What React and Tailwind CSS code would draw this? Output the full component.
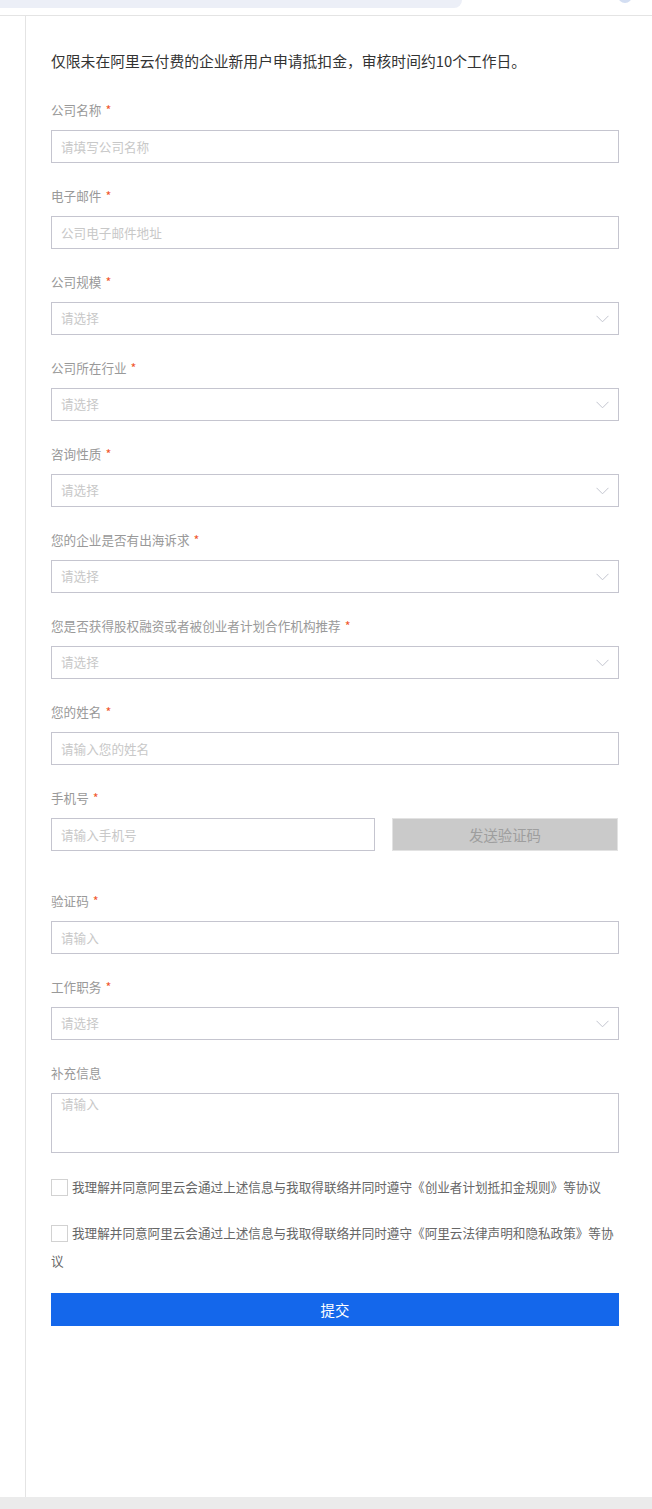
import React from 'react';

const fields = [
  { label: '公司名称', type: 'input', placeholder: '请填写公司名称' },
  { label: '电子邮件', type: 'input', placeholder: '公司电子邮件地址' },
  { label: '公司规模', type: 'select' },
  { label: '公司所在行业', type: 'select' },
  { label: '咨询性质', type: 'select' },
  { label: '您的企业是否有出海诉求', type: 'select' },
  { label: '您是否获得股权融资或者被创业者计划合作机构推荐', type: 'select' },
  { label: '您的姓名', type: 'input', placeholder: '请输入您的姓名' },
];

const Chevron = () => (
  <svg width="13" height="8" viewBox="0 0 13 8" fill="none">
    <path d="M0.5 0.8L6.5 6.8L12.5 0.8" stroke="#c3c5cf" strokeWidth="1" />
  </svg>
);

const Label = ({ text, required = true }) => (
  <div className="h-[20px] leading-[20px] text-[12.6px] text-[#999] mb-[10px]">
    {text}
    {required && <span className="text-[#f0572e] ml-[4px]">*</span>}
  </div>
);

const TextInput = ({ placeholder, className = '' }) => (
  <input
    readOnly
    placeholder={placeholder}
    className={`h-[33px] border border-[#c5c5cf] px-[9px] text-[12.6px] outline-none bg-white placeholder:text-[#c8c8c8] ${className}`}
  />
);

const SelectBox = () => (
  <div className="h-[33px] w-full border border-[#c5c5cf] pl-[9px] pr-[9px] flex items-center justify-between text-[12.6px] text-[#c8c8c8]">
    <span>请选择</span>
    <Chevron />
  </div>
);

const Field = ({ field }) => (
  <div className="mb-[23px]">
    <Label text={field.label} />
    {field.type === 'input' ? <TextInput placeholder={field.placeholder} className="w-full" /> : <SelectBox />}
  </div>
);

const Agreement = ({ text }) => (
  <p className="leading-[28px] text-[12.6px] text-[#666]">
    <span className="inline-block w-[17px] h-[17px] border border-[#d2d2d2] bg-white align-[-4px] mr-[4px]" />
    {text}
  </p>
);

export default function App() {
  return (
    <div
      className="w-[652px] min-h-[1509px] bg-white flex flex-col"
      style={{ fontFamily: '"Noto Sans CJK SC", "Noto Sans", sans-serif' }}
    >
      {/* top strip: tail of search bar */}
      <div className="h-[16px] border-b border-[#e4e4e4] flex justify-between overflow-hidden">
        <div className="w-[462px] h-[8px] bg-[#eceff7] rounded-br-[14px]" />
        <div className="w-[14px] h-[14px] rounded-full bg-[#d3def2] -mt-[11px] mr-[20px]" />
      </div>

      <div className="flex flex-1">
        <div className="w-[26px] border-r border-[#e4e4e4] shrink-0" />
        <div className="w-[568px] pl-[25px] pt-[35px] box-content">
          <p className="text-[14.8px] leading-[20px] text-[#333] mb-[29px]">
            仅限未在阿里云付费的企业新用户申请抵扣金，审核时间约10个工作日。
          </p>

          {fields.map((f) => (
            <Field key={f.label} field={f} />
          ))}

          <div className="mb-[40px]">
            <Label text="手机号" />
            <div className="flex">
              <TextInput placeholder="请输入手机号" className="w-[324px]" />
              <button className="ml-[17px] w-[226px] h-[33px] bg-[#cacaca] border border-[#e2e2e2] text-[14.4px] text-[#9e9e9e]">
                发送验证码
              </button>
            </div>
          </div>

          <Field field={{ label: '验证码', type: 'input', placeholder: '请输入' }} />
          <Field field={{ label: '工作职务', type: 'select' }} />

          <div className="mb-[20px]">
            <Label text="补充信息" required={false} />
            <textarea
              readOnly
              placeholder="请输入"
              className="block w-full h-[60px] border border-[#c5c5cf] px-[9px] pt-[1px] leading-[18px] text-[12.6px] resize-none outline-none placeholder:text-[#c8c8c8]"
            />
          </div>

          <div className="flex flex-col gap-[18px]">
            <Agreement text="我理解并同意阿里云会通过上述信息与我取得联络并同时遵守《创业者计划抵扣金规则》等协议" />
            <Agreement text="我理解并同意阿里云会通过上述信息与我取得联络并同时遵守《阿里云法律声明和隐私政策》等协议" />
          </div>

          <button className="mt-[18px] w-full h-[33px] bg-[#1467eb] text-white text-[14.4px]">提交</button>
        </div>
      </div>

      <div className="h-[12px] bg-[#ebebeb]" />
    </div>
  );
}
